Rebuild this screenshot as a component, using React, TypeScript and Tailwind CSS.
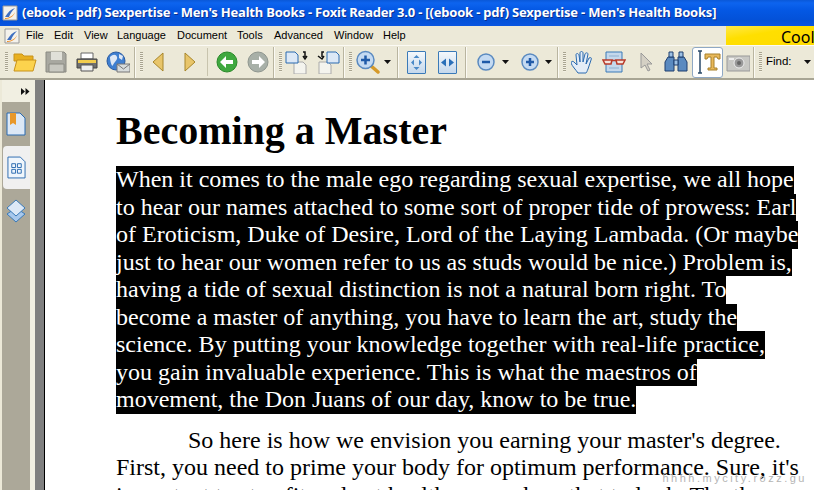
import React from "react";

const Grip = ({ className = "" }: { className?: string }) => (
  <div className={`w-[3px] h-[20px] shrink-0 bg-[repeating-linear-gradient(to_bottom,#a8a490_0,#a8a490_1px,#f4f1e4_1px,#f4f1e4_2px)] ${className}`} />
);

const Sep = ({ className = "" }: { className?: string }) => (
  <div className={`w-[2px] h-[31px] shrink-0 border-l border-[#b9b5a0] bg-[#fbfaf4] ${className}`} />
);

const Caret = ({ className = "" }: { className?: string }) => (
  <svg viewBox="0 0 7 4" className={`w-[7px] h-[4px] shrink-0 ${className}`}>
    <path d="M0 0h7L3.5 4z" fill="#111" />
  </svg>
);

const Btn = ({ className = "", children }: { className?: string; children: React.ReactNode }) => (
  <div className={`w-[31px] h-[31px] shrink-0 flex items-center justify-center ${className}`}>{children}</div>
);

const Svg = ({ children }: { children: React.ReactNode }) => (
  <svg viewBox="0 0 24 24" className="w-[24px] h-[24px]">{children}</svg>
);

const AppLogo = ({ size }: { size: number }) => (
  <svg viewBox="0 0 16 16" width={size} height={size} className="shrink-0">
    <path d="M1 1h14v14H1z" fill="#f4f2ec" stroke="#9a9a9a" />
    <path d="M3 12c3-5 6-8 10-9-3 3-5 6-6 9z" fill="#3f6fc0" />
    <path d="M3 13c4 0 8-2 10-6-1 4-5 7-10 7z" fill="#f08a1e" />
  </svg>
);

const lines = [
  "When it comes to the male ego regarding sexual expertise, we all hope",
  "to hear our names attached to some sort of proper tide of prowess: Earl",
  "of Eroticism, Duke of Desire, Lord of the Laying Lambada. (Or maybe",
  "just to hear our women refer to us as studs would be nice.) Problem is,",
  "having a tide of sexual distinction is not a natural born right. To",
  "become a master of anything, you have to learn the art, study the",
  "science. By putting your knowledge together with real-life practice,",
  "you gain invaluable experience. This is what the maestros of",
  "movement, the Don Juans of our day, know to be true.",
];

const menus = [
  ["File", "w-[28px]"],
  ["Edit", "w-[30px]"],
  ["View", "w-[33px]"],
  ["Language", "w-[60px]"],
  ["Document", "w-[60px]"],
  ["Tools", "w-[37px]"],
  ["Advanced", "w-[60px]"],
  ["Window", "w-[49px]"],
  ["Help", "w-[36px]"],
];

export default function App() {
  return (
    <div className="w-[814px] h-[490px] overflow-hidden relative bg-white font-['Liberation_Sans',sans-serif]">
      {/* title bar */}
      <div className="h-[26px] flex items-center pl-[2px] gap-[4px] bg-[linear-gradient(to_bottom,#0a58d8_0,#0d64ef_3px,#0458e4_10px,#0351d8_20px,#0a55e0_26px)]">
        <AppLogo size={16} />
        <span className="text-white font-bold text-[13px] font-['Noto_Sans',sans-serif] whitespace-nowrap tracking-[-0.2px] [text-shadow:1px_1px_0_#0a2f8f]">
          (ebook - pdf) Sexpertise - Men's Health Books - Foxit Reader 3.0 - [(ebook - pdf) Sexpertise - Men's Health Books]
        </span>
      </div>

      {/* menu bar */}
      <div className="h-[20px] flex items-center bg-[#ece9d8] border-b border-[#fbfaf4] relative">
        <div className="ml-[4px] w-[22px]"><AppLogo size={16} /></div>
        {menus.map(([m, w]) => (
          <span key={m} className={`${w} text-[11px] text-black`}>{m}</span>
        ))}
        <div className="absolute right-0 top-0 w-[88px] h-[19px] bg-[linear-gradient(170deg,#ffe94a_0,#ffdf00_40%,#ffdb00_100%)] overflow-hidden">
          <span className="absolute left-[55px] top-[-1px] text-[16px] text-black font-['Noto_Sans',sans-serif]">Cool</span>
        </div>
      </div>

      {/* toolbar */}
      <div className="h-[34px] flex items-center bg-[#ece9d8] border-b-2 border-[#a8a594] pl-[5px]">
        <Grip />
        <Btn className="ml-[1px]">
          <Svg>
            <path d="M1 4h8l2 2h9v5H1z" fill="#e8b020" stroke="#c8921a" />
            <path d="M1 21l3-11h19l-3 11z" fill="#fcd34d" stroke="#c8921a" />
          </Svg>
        </Btn>
        <Btn>
          <Svg>
            <path d="M2 2h18l2 2v18H2z" fill="#a8a8a0" stroke="#8a8a82" />
            <path d="M7 2h11v8H7z" fill="#e0e0d8" />
            <path d="M5 14h15v8H5z" fill="#c8c8c0" stroke="#8a8a82" />
          </Svg>
        </Btn>
        <Btn>
          <Svg>
            <path d="M6 3h12v6H6z" fill="#fff" stroke="#666" />
            <path d="M2 9h20v9H2z" fill="#6f6f6f" stroke="#444" />
            <path d="M3 10h18v3H3z" fill="#f2cc4d" />
            <path d="M6 15h12v6H6z" fill="#eee" stroke="#555" />
          </Svg>
        </Btn>
        <Btn>
          <Svg>
            <circle cx="10" cy="11" r="9" fill="#3f7fd0" stroke="#2a5aa0" />
            <path d="M4 7c3-3 6-3 7 0s-3 5-4 8-3-4-3-8zM13 4l4 2-1 4-3-2z" fill="#dfe8f4" />
            <path d="M11 14h13v8H11z" fill="#d8dcdc" stroke="#777" />
            <path d="M11 14l6.500 5 6.500-5" fill="none" stroke="#777" />
          </Svg>
        </Btn>
        <Sep className="ml-[1px]" />
        <Grip className="ml-[4px]" />
        <Btn className="ml-[-1px]">
          <svg viewBox="0 0 12 20" className="w-[12px] h-[20px]"><path d="M11 1v18L1 10z" fill="#e8c56a" stroke="#a8862a" /></svg>
        </Btn>
        <Btn className="ml-[1px]">
          <svg viewBox="0 0 12 20" className="w-[12px] h-[20px]"><path d="M1 1v18l10-9z" fill="#e8c56a" stroke="#a8862a" /></svg>
        </Btn>
        <div className="ml-[2px] w-px h-[28px] bg-[#c8c4ae] shrink-0" />
        <Btn className="ml-[3px]">
          <Svg>
            <circle cx="12" cy="12" r="10" fill="#3fa83f" stroke="#2a8a2a" />
            <path d="M5 12l6-6v4h7v4h-7v4z" fill="#fff" />
          </Svg>
        </Btn>
        <Btn>
          <Svg>
            <circle cx="12" cy="12" r="10" fill="#a8b0a8" stroke="#8f968f" />
            <path d="M19 12l-6-6v4H6v4h7v4z" fill="#fff" />
          </Svg>
        </Btn>
        <Sep />
        <Grip className="ml-[4px]" />
        <Btn className="ml-[-1px]">
          <Svg>
            <path d="M9 12h9l3 3v9H9z" fill="#f4f4ee" stroke="#aaa" />
            <path d="M1 2h9l3 3v8H1z" fill="#dce8f6" stroke="#2a6ab0" />
            <path d="M18 2h2v5M18 6l2 3 2-3" fill="none" stroke="#111" strokeWidth="1.500" />
          </Svg>
        </Btn>
        <Btn>
          <Svg>
            <path d="M3 12h9l3 3v9H3z" fill="#f4f4ee" stroke="#aaa" />
            <path d="M11 2h9l3 3v8H11z" fill="#dce8f6" stroke="#2a6ab0" />
            <path d="M8 2H6v5M2 6l4 3 2-3" fill="none" stroke="#111" strokeWidth="1.500" />
          </Svg>
        </Btn>
        <Sep />
        <Grip className="ml-[4px]" />
        <Btn>
          <Svg>
            <path d="M14 15l8 7" stroke="#d69a2a" strokeWidth="3.500" strokeLinecap="round" />
            <circle cx="9.500" cy="10" r="8.500" fill="#c4daf2" stroke="#5a8ac0" strokeWidth="1.500" />
            <path d="M9.500 5.500v9M5 10h9" stroke="#1f5aa8" strokeWidth="2.500" />
          </Svg>
        </Btn>
        <Caret className="ml-[1px]" />
        <Sep className="ml-[6px]" />
        <Btn className="ml-[2px]">
          <div className="w-[19px] h-[23px] rounded-[1px] border border-[#3a7ab8] bg-[linear-gradient(to_bottom,#f4f8fc,#c4d8ec)]">
            <svg viewBox="0 0 17 21" className="w-full h-full">
              <path d="M8.500 3l3 3h-6zM8.500 18l3-3h-6zM3 10.500l3-3v6zM14 10.500l-3-3v6z" fill="#4a8ac8" />
            </svg>
          </div>
        </Btn>
        <Btn>
          <div className="w-[19px] h-[23px] rounded-[1px] border border-[#3a7ab8] bg-[linear-gradient(to_bottom,#f4f8fc,#c4d8ec)]">
            <svg viewBox="0 0 17 21" className="w-full h-full">
              <path d="M2 10.500l5-4v8zM15 10.500l-5-4v8z" fill="#2a70b8" />
            </svg>
          </div>
        </Btn>
        <Sep className="ml-[2px]" />
        <Btn className="ml-[3px]">
          <Svg>
            <circle cx="12" cy="12" r="8" fill="#c4daf2" stroke="#5a8ac0" strokeWidth="1.500" />
            <path d="M8 12h8" stroke="#1f5aa8" strokeWidth="2.500" />
          </Svg>
        </Btn>
        <Caret className="ml-[1px]" />
        <Btn className="ml-[5px]">
          <Svg>
            <circle cx="12" cy="12" r="8" fill="#c4daf2" stroke="#5a8ac0" strokeWidth="1.500" />
            <path d="M8 12h8M12 8v8" stroke="#1f5aa8" strokeWidth="2.500" />
          </Svg>
        </Btn>
        <Caret />
        <Sep className="ml-[5px]" />
        <Grip className="ml-[4px]" />
        <Btn className="ml-[1px]">
          <Svg>
            <path d="M7 23c-2-3-6-7-7-10 0-2 2-2 3-1l3 3-1-10c0-2 2-2 3 0l1 7V3c0-2 3-2 3 0v9l2-8c1-2 3-1 3 0l-2 10 3-6c2-1 3 0 2 2l-3 9c-1 2-1 3-2 4z" fill="#e4edf7" stroke="#2a6ab0" />
          </Svg>
        </Btn>
        <Btn>
          <Svg>
            <path d="M4 2h16v20H4z" fill="#c4d8ec" stroke="#3a7ab8" />
            <path d="M7 6h10M7 18h10" stroke="#8fb0d0" />
            <path d="M1 10h9l-1 4H3zM14 10h9l-2 4h-6z" fill="#f4e4dc" stroke="#b83a2a" strokeWidth="1.500" />
            <path d="M10 10.500h4" stroke="#b83a2a" strokeWidth="1.500" />
          </Svg>
        </Btn>
        <Btn>
          <Svg>
            <path d="M8 3v15l4-3 3 6 2-1-3-6h5z" fill="#d4d0c4" stroke="#999" />
          </Svg>
        </Btn>
        <Btn>
          <Svg>
            <path d="M4 7h6v14H1V12zM14 7h6l3 5v9h-9z" fill="#5a8ac0" stroke="#1f3f6f" />
            <path d="M5 2h4v5H5zM15 2h4v5h-4zM10 10h4v5h-4z" fill="#9cc0e4" stroke="#1f3f6f" />
          </Svg>
        </Btn>
        <div className="ml-[1px] w-[31px] h-[31px] shrink-0 rounded-[3px] border border-[#8fa8c4] bg-white flex items-center pl-[3px]">
          <svg viewBox="0 0 26 26" className="w-[26px] h-[26px]">
            <path d="M2 2h4M2 24h4M4 2v22" stroke="#2a4a6a" strokeWidth="1.500" fill="none" />
            <path d="M9 5h15v5h-2l-1-2h-3v11h3v2H12v-2h3V8h-3l-1 2H9z" fill="#e8b85a" stroke="#a8802a" />
          </svg>
        </div>
        <Btn className="ml-[-1px]">
          <Svg>
            <path d="M1 6h23v15H1z" fill="#c8c8c4" stroke="#999" />
            <circle cx="13" cy="13" r="5" fill="#999" stroke="#eee" />
            <circle cx="13" cy="13" r="2" fill="#666" />
            <path d="M3 8h5v2H3z" fill="#eee" />
          </Svg>
        </Btn>
        <Sep />
        <Grip className="ml-[4px]" />
        <span className="ml-[4px] w-[26px] text-[11.500px] text-black">Find:</span>
        <Caret className="ml-[12px]" />
      </div>

      {/* body */}
      <div className="flex h-[410px]">
        <div className="w-[35px] shrink-0 bg-[#f1efe2] border-l-2 border-[#ece9d8] flex flex-col">
          <div className="h-[22px] flex justify-end items-center pr-[5px]">
            <svg viewBox="0 0 9 7" className="w-[9px] h-[7px]"><path d="M0 0l4 3.500L0 7zM4.500 0l4 3.500-4 3.500z" fill="#111" /></svg>
          </div>
          <div className="flex-1 w-[28px] bg-[#aca899] flex flex-col items-center pt-[10px]">
            <svg viewBox="0 0 20 24" className="w-[20px] h-[24px] mb-[10px]">
              <path d="M1 1h13l5 5v17H1z" fill="#dce8f6" stroke="#2a6ab0" />
              <path d="M4 1h6v12l-3-2-3 2z" fill="#e8982a" />
            </svg>
            <div className="w-[27px] self-end h-[43px] rounded-l-[4px] bg-[#f0f0f0] flex items-center justify-center">
              <svg viewBox="0 0 20 24" className="w-[19px] h-[23px]">
                <path d="M1 1h13l5 5v17H1z" fill="#f0f6fc" stroke="#2a6ab0" />
                <path d="M5 8h4v4H5zM11 8h4v4h-4zM5 14h4v4H5zM11 14h4v4h-4z" fill="none" stroke="#2a6ab0" />
              </svg>
            </div>
            <svg viewBox="0 0 20 24" className="w-[20px] h-[24px] mt-[10px]">
              <path d="M10 9l9 6-9 8-9-8z" fill="#a8c8ec" stroke="#3a7ab8" />
              <path d="M10 1l9 8-9 8-9-8z" fill="#dce8f6" stroke="#3a7ab8" />
            </svg>
          </div>
        </div>
        <div className="w-[9px] shrink-0 bg-[#808080]" />
        <div className="w-px shrink-0 bg-black" />
        <div className="flex-1 min-w-0 bg-white pl-[71px] overflow-hidden font-['Liberation_Serif',serif] text-black">
          <div className="mt-[28px] text-[40px] leading-[46px] font-bold whitespace-nowrap">Becoming a Master</div>
          <div className="mt-[12px] flex flex-col items-start">
            {lines.map((l) => (
              <span key={l} className="block bg-black text-white text-[24px] leading-[27.500px] h-[27.500px] whitespace-nowrap">{l}</span>
            ))}
          </div>
          <div className="mt-[13px] text-[24px] leading-[27.500px] whitespace-nowrap">
            <div className="pl-[72px]">So here is how we envision you earning your master's degree.</div>
            <div>First, you need to prime your body for optimum performance. Sure, it's</div>
            <div>important to stay fit and get healthy enough so that to look. The th</div>
          </div>
        </div>
      </div>

      <span className="absolute right-[7px] bottom-[6px] text-[11px] leading-[11px] text-[#b4b4b4] tracking-[2.500px] font-['Liberation_Sans',sans-serif]">hhhh.mycity.rozz.gu</span>
    </div>
  );
}
